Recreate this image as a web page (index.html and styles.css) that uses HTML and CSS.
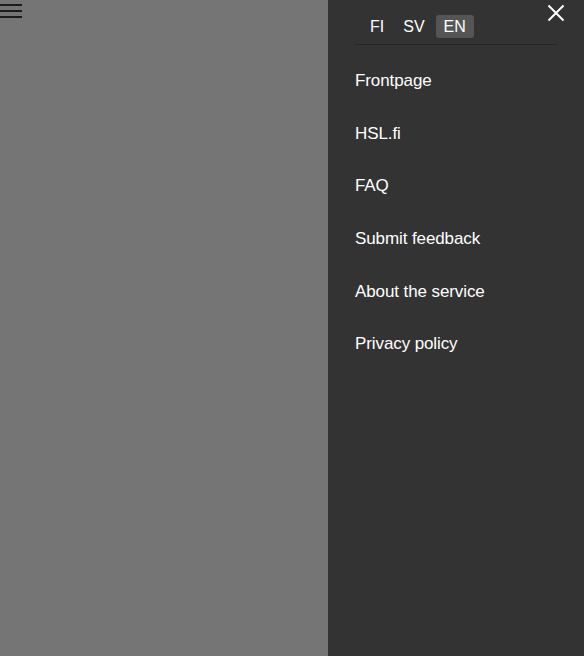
FILE: index.html
```html
<!DOCTYPE html>
<html lang="en">
<head>
<meta charset="utf-8">
<title>Menu</title>
<link rel="stylesheet" href="styles.css">
</head>
<body>
<div class="page">
  <div class="backdrop">
    <div class="hamburger">
      <span class="bar"></span>
      <span class="bar"></span>
      <span class="bar"></span>
    </div>
  </div>
  <aside class="drawer">
    <div class="drawer-header">
      <div class="langs">
        <span class="lang">FI</span>
        <span class="lang">SV</span>
        <span class="lang active">EN</span>
      </div>
      <button class="close" aria-label="Close">
        <svg width="18" height="18" viewBox="0 0 18 18">
          <path d="M1.5 1.5 L16.5 16.5 M16.5 1.5 L1.5 16.5" stroke="#ffffff" stroke-width="2" fill="none"/>
        </svg>
      </button>
    </div>
    <nav class="menu">
      <a class="item">Frontpage</a>
      <a class="item">HSL.fi</a>
      <a class="item">FAQ</a>
      <a class="item">Submit feedback</a>
      <a class="item">About the service</a>
      <a class="item">Privacy policy</a>
    </nav>
  </aside>
</div>
</body>
</html>
```

FILE: styles.css
```css
html, body {
  margin: 0;
  padding: 0;
  height: 100%;
}
body {
  font-family: "Liberation Sans", Arial, sans-serif;
  background: #757575;
}
.page {
  display: flex;
  height: 656px;
}
.backdrop {
  flex: 1;
  background: #757575;
}
.hamburger {
  display: flex;
  flex-direction: column;
  gap: 4px;
  width: 22px;
  padding-top: 4px;
}
.bar {
  display: block;
  height: 2px;
  background: #1c1c1c;
}
.drawer {
  width: 256px;
  background: #333333;
  color: #ffffff;
  display: flex;
  flex-direction: column;
}
.drawer-header {
  display: flex;
  align-items: flex-start;
  height: 44px;
  margin: 0 27px;
  border-bottom: 1px solid #242424;
}
.langs {
  display: flex;
  gap: 3px;
  margin-top: 15px;
  margin-left: 7px;
}
.lang {
  display: block;
  height: 23px;
  line-height: 23px;
  padding: 0 8px;
  font-size: 16px;
  border-radius: 3px;
  color: #ffffff;
}
.lang.active {
  background: #555555;
}
.close {
  margin-left: auto;
  margin-right: -8px;
  margin-top: 4px;
  padding: 0;
  border: 0;
  background: none;
  width: 18px;
  height: 18px;
  display: block;
}
.close svg {
  display: block;
}
.menu {
  display: flex;
  flex-direction: column;
  padding: 10px 0 0 27px;
}
.item {
  display: flex;
  align-items: center;
  height: 52.6px;
  font-size: 17px;
  color: #ffffff;
  letter-spacing: -0.1px;
}
```
